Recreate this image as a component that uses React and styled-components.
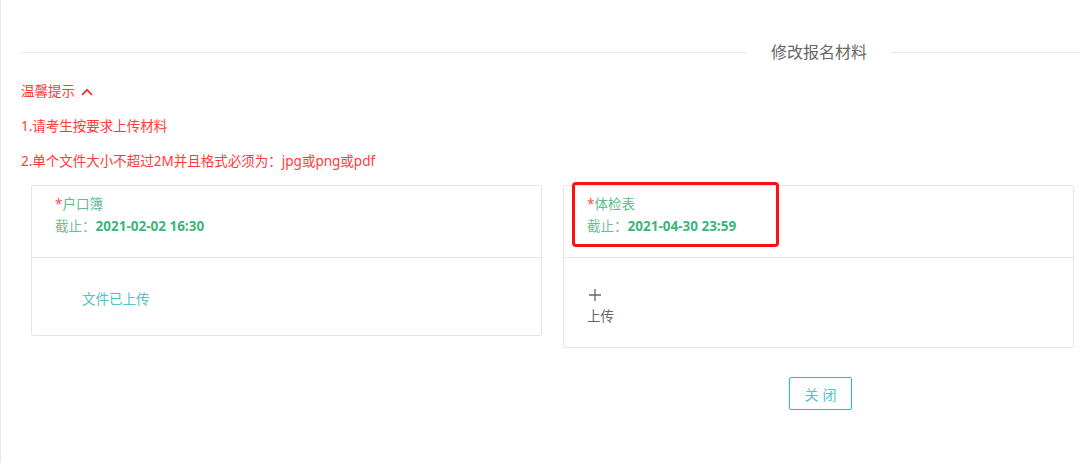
import React from "react"
import styled, { createGlobalStyle } from "styled-components"

const GlobalStyle = createGlobalStyle`
  html, body {
    margin: 0;
    padding: 0;
    background: #fff;
  }
  body {
    font-family: "Noto Sans", "Noto Sans CJK SC", sans-serif;
  }
`

const Page = styled.div`
  height: 463px;
  box-sizing: border-box;
  border-left: 1px solid #e8e8e8;
  padding: 42px 0 0 19px;
  overflow: hidden;
`

const Divider = styled.div`
  display: flex;
  align-items: center;
  height: 20px;
`

const Line = styled.div`
  height: 1px;
  background: #e8e8e8;
  flex: ${props => (props.fixed ? `0 0 ${props.fixed}px` : "1")};
`

const DividerTitle = styled.span`
  padding: 0 24px;
  font-size: 16px;
  line-height: 20px;
  color: #666;
`

// full-width colon, kept at a full em so it is not trimmed
const Colon = styled.span`
  display: inline-block;
  width: 1em;
`

const Tips = styled.div`
  margin-top: 12px;
  padding-left: 1px;
  color: #ff3a3a;
  font-size: 13.5px;
  line-height: 35px;

  p {
    margin: 0;
  }
`

const TipsToggle = styled.p`
  display: flex;
  align-items: center;

  svg {
    margin-left: 6px;
  }
`

const Grid = styled.div`
  margin-top: 6px;
  display: grid;
  grid-template-columns: 1fr 1fr;
  column-gap: 21px;
  align-items: start;
  padding: 0 6px 0 11px;
`

const Card = styled.div`
  position: relative;
  border: 1px solid #e6e6e6;
  border-radius: 2px;
`

const CardHeader = styled.div`
  height: 72px;
  box-sizing: border-box;
  padding: 7px 0 0 23px;
  border-bottom: 1px solid #e6e6e6;
  font-size: 13.5px;
  line-height: 22px;
`

const Title = styled.div`
  color: #5fbd8e;

  em {
    font-style: normal;
    color: #ff4d4d;
  }
`

const Deadline = styled.div`
  color: #6fbf92;

  b {
    color: #3db57a;
    font-weight: 700;
  }
`

const CardBody = styled.div`
  box-sizing: border-box;
  height: ${props => props.height}px;
  padding: ${props => props.pad};
  font-size: 13.5px;
  line-height: 20px;
`

const Uploaded = styled.div`
  color: #4fc2c2;
`

const UploadButton = styled.div`
  display: inline-flex;
  flex-direction: column;
  align-items: flex-start;
  color: #666;
  cursor: pointer;

  svg {
    margin: 0 0 5px 2px;
  }
`

const Highlight = styled.div`
  position: absolute;
  left: 8px;
  top: -4px;
  width: 207px;
  height: 65px;
  box-sizing: border-box;
  border: 3px solid #ff1010;
  border-radius: 4px;
  pointer-events: none;
`

const Footer = styled.div`
  display: flex;
  justify-content: center;
  padding-left: 541px;
  margin-top: 29px;
`

const CloseButton = styled.button`
  width: 63px;
  height: 33px;
  box-sizing: border-box;
  border: 1px solid #1fc0c3;
  border-radius: 2px;
  background: #fff;
  color: #4fc6c8;
  font-family: inherit;
  font-size: 14px;
  letter-spacing: 4px;
  padding: 0 0 0 4px;
  cursor: pointer;
`

const ChevronUp = () => (
  <svg width="12" height="8" viewBox="0 0 12 8" fill="none">
    <path d="M1 7 L6 1.8 L11 7" stroke="#ff2a2a" strokeWidth="1.8" />
  </svg>
)

const PlusIcon = () => (
  <svg width="12" height="12" viewBox="0 0 12 12" fill="none">
    <path d="M6 0 V12 M0 6 H12" stroke="#666" strokeWidth="1.3" />
  </svg>
)

const MaterialCard = ({ title, deadline, highlight, children, bodyHeight, bodyPad }) => (
  <Card>
    <CardHeader>
      <Title>
        <em>*</em>
        {title}
      </Title>
      <Deadline>
        截止<Colon>：</Colon>
        <b>{deadline}</b>
      </Deadline>
    </CardHeader>
    <CardBody height={bodyHeight} pad={bodyPad}>
      {children}
    </CardBody>
    {highlight && <Highlight />}
  </Card>
)

export default function App() {
  return (
    <>
      <GlobalStyle />
      <Page>
        <Divider>
          <Line />
          <DividerTitle>修改报名材料</DividerTitle>
          <Line fixed={189} />
        </Divider>

        <Tips>
          <TipsToggle>
            温馨提示
            <ChevronUp />
          </TipsToggle>
          <p>1.请考生按要求上传材料</p>
          <p>
            2.单个文件大小不超过2M并且格式必须为<Colon>：</Colon>jpg或png或pdf
          </p>
        </Tips>

        <Grid>
          <MaterialCard
            title="户口簿"
            deadline="2021-02-02 16:30"
            bodyHeight={77}
            bodyPad="31px 0 0 50px"
          >
            <Uploaded>文件已上传</Uploaded>
          </MaterialCard>
          <MaterialCard
            title="体检表"
            deadline="2021-04-30 23:59"
            bodyHeight={89}
            bodyPad="28px 0 0 23px"
            highlight
          >
            <UploadButton>
              <PlusIcon />
              上传
            </UploadButton>
          </MaterialCard>
        </Grid>

        <Footer>
          <CloseButton>关闭</CloseButton>
        </Footer>
      </Page>
    </>
  )
}
